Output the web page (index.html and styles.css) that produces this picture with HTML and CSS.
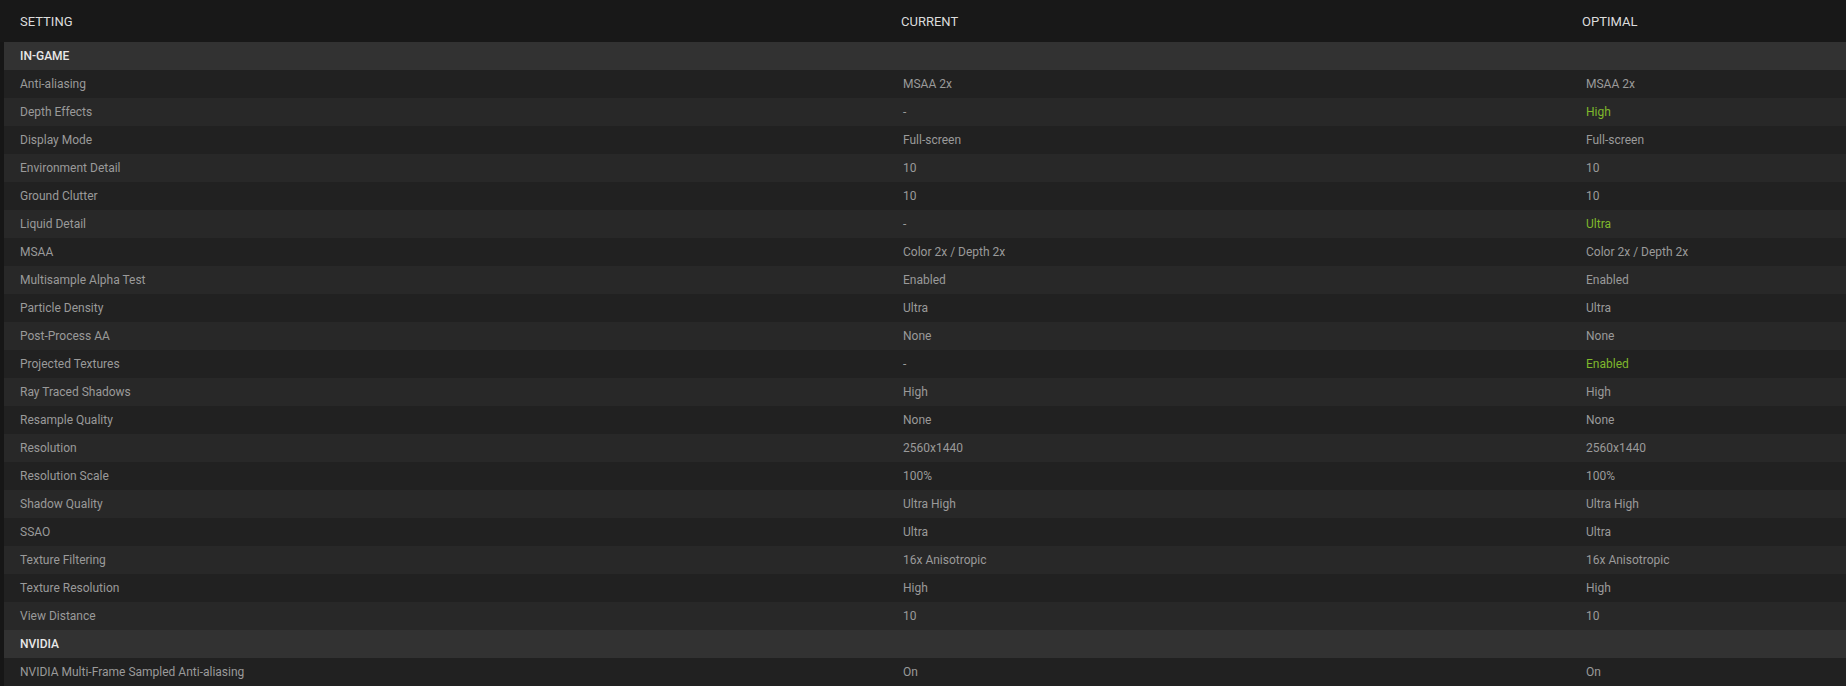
FILE: index.html
```html
<!DOCTYPE html>
<html>
<head>
<meta charset="utf-8">
<link rel="stylesheet" href="styles.css">
</head>
<body>
<div class="table">
  <div class="head">
    <div class="hcell">SETTING</div>
    <div class="hcell">CURRENT</div>
    <div class="hcell">OPTIMAL</div>
  </div>
  <div class="section">
    <div class="group">IN-GAME</div>
    <div class="row"><div class="cell">Anti-aliasing</div><div class="cell">MSAA 2x</div><div class="cell">MSAA 2x</div></div>
    <div class="row"><div class="cell">Depth Effects</div><div class="cell">-</div><div class="cell green">High</div></div>
    <div class="row"><div class="cell">Display Mode</div><div class="cell">Full-screen</div><div class="cell">Full-screen</div></div>
    <div class="row"><div class="cell">Environment Detail</div><div class="cell">10</div><div class="cell">10</div></div>
    <div class="row"><div class="cell">Ground Clutter</div><div class="cell">10</div><div class="cell">10</div></div>
    <div class="row"><div class="cell">Liquid Detail</div><div class="cell">-</div><div class="cell green">Ultra</div></div>
    <div class="row"><div class="cell">MSAA</div><div class="cell">Color 2x / Depth 2x</div><div class="cell">Color 2x / Depth 2x</div></div>
    <div class="row"><div class="cell">Multisample Alpha Test</div><div class="cell">Enabled</div><div class="cell">Enabled</div></div>
    <div class="row"><div class="cell">Particle Density</div><div class="cell">Ultra</div><div class="cell">Ultra</div></div>
    <div class="row"><div class="cell">Post-Process AA</div><div class="cell">None</div><div class="cell">None</div></div>
    <div class="row"><div class="cell">Projected Textures</div><div class="cell">-</div><div class="cell green">Enabled</div></div>
    <div class="row"><div class="cell">Ray Traced Shadows</div><div class="cell">High</div><div class="cell">High</div></div>
    <div class="row"><div class="cell">Resample Quality</div><div class="cell">None</div><div class="cell">None</div></div>
    <div class="row"><div class="cell">Resolution</div><div class="cell">2560x1440</div><div class="cell">2560x1440</div></div>
    <div class="row"><div class="cell">Resolution Scale</div><div class="cell">100%</div><div class="cell">100%</div></div>
    <div class="row"><div class="cell">Shadow Quality</div><div class="cell">Ultra High</div><div class="cell">Ultra High</div></div>
    <div class="row"><div class="cell">SSAO</div><div class="cell">Ultra</div><div class="cell">Ultra</div></div>
    <div class="row"><div class="cell">Texture Filtering</div><div class="cell">16x Anisotropic</div><div class="cell">16x Anisotropic</div></div>
    <div class="row"><div class="cell">Texture Resolution</div><div class="cell">High</div><div class="cell">High</div></div>
    <div class="row"><div class="cell">View Distance</div><div class="cell">10</div><div class="cell">10</div></div>
  </div>
  <div class="section">
    <div class="group">NVIDIA</div>
    <div class="row"><div class="cell">NVIDIA Multi-Frame Sampled Anti-aliasing</div><div class="cell">On</div><div class="cell">On</div></div>
  </div>
</div>
</body>
</html>
```

FILE: styles.css
```css
html, body {
  margin: 0;
  padding: 0;
  background: #161616;
  font-family: Roboto, "Liberation Sans", Arial, sans-serif;
  overflow: hidden;
}
.table {
  display: flex;
  flex-direction: column;
  width: 1846px;
}
.head {
  display: grid;
  grid-template-columns: 881px 681px 1fr;
  height: 42px;
  align-items: center;
  padding-left: 4px;
  background: #181818;
}
.hcell {
  padding-left: 16px;
  font-size: 13px;
  color: #dcdcdc;
}
.section {
  display: flex;
  flex-direction: column;
  margin-left: 4px;
}
.group {
  height: 28px;
  display: flex;
  align-items: center;
  padding-left: 16px;
  background: #323232;
  color: #e8e8e8;
  font-size: 12px;
  font-weight: 500;
}
.row {
  display: grid;
  grid-template-columns: 883px 683px 1fr;
  height: 28px;
  align-items: center;
  background: #212121;
}
.row:nth-child(odd) {
  background: #282828;
}
.cell {
  padding-left: 16px;
  font-size: 12px;
  color: #9a9a9a;
  white-space: nowrap;
}
.cell.green {
  color: #7fb82c;
}
```
